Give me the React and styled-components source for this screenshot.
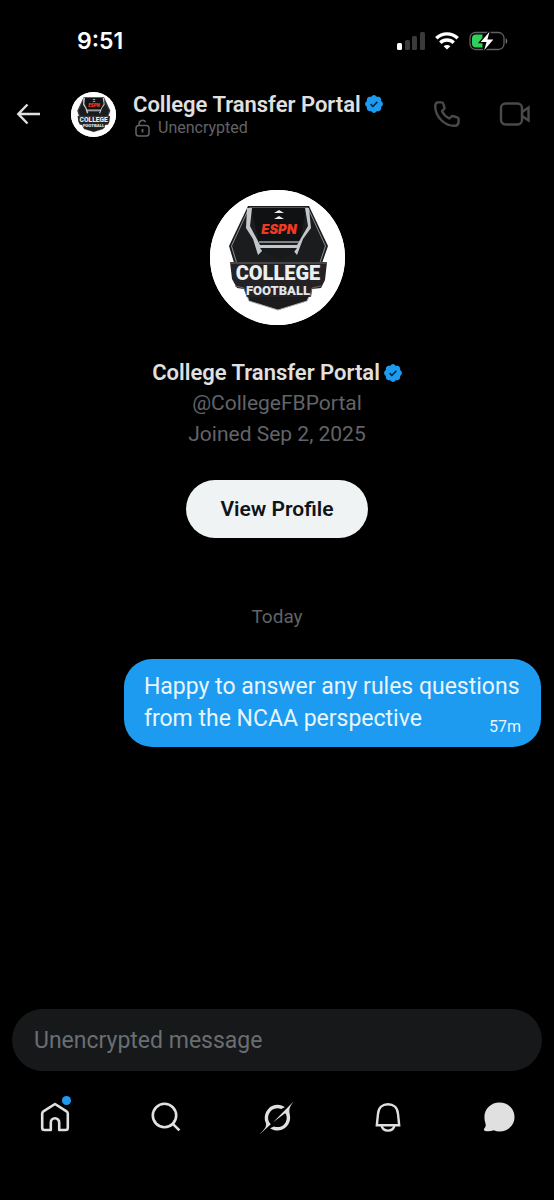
import React from "react";
import styled, { createGlobalStyle } from "styled-components";

const GlobalStyle = createGlobalStyle`
  * {
    box-sizing: border-box;
  }

  body {
    margin: 0;
    background: #000;
    color: #e0e0e0;
    font-family: Roboto, "Liberation Sans", sans-serif;
  }

  button,
  input {
    font: inherit;
    color: inherit;
    border: 0;
    padding: 0;
    background: none;
  }

  svg {
    display: block;
  }
`;

const Screen = styled.div`
  display: flex;
  flex-direction: column;
  min-height: 100vh;
`;

const StatusBar = styled.div`
  display: flex;
  align-items: center;
  justify-content: space-between;
  height: 82px;
  padding: 0 46px 0 77px;
  color: #fff;
`;

const Clock = styled.time`
  font-family: Inter, sans-serif;
  font-size: 23px;
  font-weight: 600;
`;

const StatusIcons = styled.div`
  display: flex;
  align-items: center;
  gap: 10px;
`;

const Header = styled.header`
  display: flex;
  align-items: center;
  height: 64px;
  padding: 0 23px 0 15px;
`;

const IconButton = styled.button`
  display: flex;
  align-items: center;
  justify-content: center;
  flex: none;
  color: ${(p) => (p.$dim ? "#4a4a4a" : "#e0e0e0")};
`;

const Avatar = styled.span`
  display: block;
  flex: none;
  width: ${(p) => p.$size}px;
  height: ${(p) => p.$size}px;
  border-radius: 50%;
  overflow: hidden;
  background: #fff;
`;

const HeaderAvatar = styled.div`
  margin: 0 17px 0 29px;
`;

const HeaderText = styled.div`
  flex: 1;
  min-width: 0;
  padding-top: 2px;
`;

const Name = styled.h1`
  display: flex;
  align-items: center;
  gap: 4px;
  margin: 0;
  font-size: 22px;
  font-weight: 600;
  line-height: ${(p) => p.$line}px;
  white-space: nowrap;
`;

const Encryption = styled.div`
  display: flex;
  align-items: center;
  gap: 8px;
  padding-left: 2px;
  font-size: 16px;
  line-height: 22px;
  color: #606468;
`;

const HeaderActions = styled.div`
  display: flex;
  align-items: center;
  gap: 38px;
`;

const Profile = styled.section`
  display: flex;
  flex-direction: column;
  align-items: center;
  padding-top: 44px;
`;

const ProfileText = styled.div`
  display: flex;
  flex-direction: column;
  align-items: center;
  margin: 32px 0 30px;
`;

const Meta = styled.p`
  margin: 0;
  font-size: 21px;
  line-height: 31px;
  color: #606468;
`;

const ProfileButton = styled.button`
  height: 58px;
  padding: 0 34px;
  border-radius: 29px;
  background: #eff3f4;
  color: #0f1419;
  font-size: 21px;
  font-weight: 600;
`;

const Messages = styled.main`
  display: flex;
  flex: 1;
  flex-direction: column;
  padding: 66px 13px 0;
`;

const Day = styled.div`
  margin-bottom: 29px;
  font-size: 19px;
  line-height: 26px;
  text-align: center;
  color: #606468;
`;

const Bubble = styled.div`
  align-self: flex-end;
  max-width: 79%;
  padding: 12px 20px;
  border-radius: 28px;
  background: #1d9bf0;
  color: #e8f5fd;
`;

const BubbleText = styled.p`
  display: flow-root;
  margin: 0;
  font-size: 23px;
  line-height: 32px;
`;

/* floats into the free end of the last line */
const BubbleTime = styled.time`
  float: right;
  margin-top: 16px;
  font-size: 16px;
  line-height: 16px;
`;

const Composer = styled.div`
  padding: 0 12px;
`;

const MessageInput = styled.input`
  display: block;
  width: 100%;
  height: 62px;
  padding: 0 22px;
  border-radius: 31px;
  background: #16181a;
  font-size: 23px;
  outline: none;

  &::placeholder {
    color: #6a6e72;
    opacity: 1;
  }
`;

const TabBar = styled.nav`
  display: grid;
  grid-template-columns: repeat(5, 1fr);
  height: 129px;
  padding-top: 27px;
`;

const Tab = styled.a`
  display: flex;
  align-items: center;
  justify-content: center;
  height: 38px;
  color: #e0e0e0;
`;

const TabIcon = styled.span`
  position: relative;
`;

const Dot = styled.span`
  position: absolute;
  top: -6px;
  right: -1px;
  width: 9px;
  height: 9px;
  border-radius: 50%;
  background: #1d9bf0;
`;

function TeamLogo() {
  return (
    <svg viewBox="0 0 135 135" width="100%" height="100%" aria-hidden="true">
      <rect width="135" height="135" fill="#fff" />
      <path d="M38 16h61l19 40-7 20H25l-6-20z" fill="#1b1c1e" />
      <path d="M39 18h59l17.500 38-6 18H27l-5.500-18z" fill="none" stroke="#8c9094" strokeWidth="1" />
      <path d="M41 18h55l-6 34H49z" fill="#101113" />
      <path d="M37 18h5l-2 18 10 19h37l11-19-3-18h4l2 20-8 11-6 16-5-6-14 10-14-10-6 6-5-16-7-11z" fill="#c3c7ca" />
      <path d="M50 58h37l-3 4-15 8-16-8z" fill="#18191b" />
      <path d="M49 51h40v2H49z" fill="#7d8184" />
      <path d="M64 23l5-3 5 3zM64 29l5-3 5 3z" fill="#e8eaec" />
      <text x="69" y="44" textAnchor="middle" fontFamily="Inter, sans-serif" fontSize="13" fontWeight="900" fontStyle="italic" fill="#f03a24">
        ESPN
      </text>
      <path d="M35 100h67l-5 11-29 9-29-9z" fill="#1b1c1e" stroke="#a9acae" strokeWidth="1" />
      <path d="M20 72h97l-2 18-4 8-9 1-1 8H37l-3-8-7-1-5-9z" fill="#242224" />
      <path d="M20 73h97M25 96l9 2 3 9M111 96l-9 2-2 9" fill="none" stroke="#68696b" strokeWidth="1" />
      <text x="68" y="90" textAnchor="middle" fontFamily="Roboto, sans-serif" fontSize="20" fontWeight="900" fill="#eceff0">
        COLLEGE
      </text>
      <text x="68" y="105" textAnchor="middle" fontFamily="Roboto, sans-serif" fontSize="13" fontWeight="900" fill="#e3e6e8">
        FOOTBALL
      </text>
    </svg>
  );
}

function Verified() {
  return (
    <svg width="18" height="18" viewBox="1.500 1.500 19 19" role="img" aria-label="Verified account">
      <path
        fill="#1d9bf0"
        d="M20.396 11c-.018-.646-.215-1.275-.57-1.816-.354-.54-.852-.972-1.438-1.246.223-.607.27-1.264.14-1.897-.131-.634-.437-1.218-.882-1.687-.47-.445-1.053-.75-1.687-.882-.633-.13-1.29-.083-1.897.14-.273-.587-.704-1.086-1.245-1.44S11.647 1.62 11 1.604c-.646.017-1.273.213-1.813.568s-.969.854-1.24 1.44c-.608-.223-1.267-.272-1.902-.14-.635.13-1.22.436-1.69.882-.445.47-.749 1.055-.878 1.688-.13.633-.08 1.29.144 1.896-.587.274-1.087.705-1.443 1.245-.356.54-.555 1.17-.574 1.817.02.647.218 1.276.574 1.817.356.54.856.972 1.443 1.245-.224.606-.274 1.263-.144 1.896.13.634.433 1.218.877 1.688.47.443 1.054.747 1.687.878.633.132 1.29.084 1.897-.136.274.586.705 1.084 1.246 1.439.54.354 1.17.551 1.816.569.647-.016 1.276-.213 1.817-.567s.972-.854 1.245-1.44c.604.239 1.266.296 1.903.164.636-.132 1.22-.447 1.68-.907.46-.46.776-1.044.908-1.681s.075-1.299-.165-1.903c.586-.274 1.084-.705 1.439-1.246.354-.54.551-1.17.569-1.816z"
      />
      <path d="M7.4 11.2l2.4 2.4 4.7-4.9" fill="none" stroke="#06263c" strokeWidth="1.7" />
    </svg>
  );
}

function SignalIcon() {
  return (
    <svg width="28" height="18" viewBox="0 0 28 18" aria-hidden="true">
      <rect x="0" y="11" width="5" height="7" rx="1.5" fill="#fff" />
      <rect x="8" y="8" width="5" height="10" rx="1.5" fill="#3a3a3a" />
      <rect x="15" y="4" width="5" height="14" rx="1.5" fill="#3a3a3a" />
      <rect x="23" y="0" width="5" height="18" rx="1.5" fill="#3a3a3a" />
    </svg>
  );
}

function WifiIcon() {
  return (
    <svg width="24" height="18" viewBox="0 0 24 18" fill="none" stroke="#fff" strokeWidth="3.4" aria-hidden="true">
      <path d="M1.300 6.300a15.200 15.200 0 0 1 21.400 0" />
      <path d="M5.300 10.800a9.400 9.400 0 0 1 13.400 0" />
      <path d="M12 17.600l-3.400-3.300a4.800 4.800 0 0 1 6.800 0z" fill="#fff" stroke="none" />
    </svg>
  );
}

function BatteryIcon() {
  return (
    <svg width="39" height="20" viewBox="0 0 39 20" aria-hidden="true">
      <rect x="1" y="1.5" width="34" height="17" rx="5.5" fill="none" stroke="#606060" strokeWidth="1.3" />
      <path d="M36.7 7.2c2 .8 2 4.8 0 5.6z" fill="#777" />
      <path d="M7 3.500h6.500v13H7a4 4 0 0 1-4-4v-5a4 4 0 0 1 4-4z" fill="#30d158" />
      <path d="M20.500.8L11.700 11h5.800l-2.300 8.300L24.300 8.600h-5.900z" fill="#fff" stroke="#000" strokeWidth="2.600" paintOrder="stroke" />
    </svg>
  );
}

function BackIcon() {
  return (
    <svg width="27" height="24" viewBox="0 0 27 24" fill="none" stroke="currentColor" strokeWidth="2.4" aria-hidden="true">
      <path d="M25 12H4M12.500 2.500L3.300 12l9.200 9.500" />
    </svg>
  );
}

function LockIcon() {
  return (
    <svg width="15" height="18" viewBox="0 0 15 18" fill="none" stroke="currentColor" strokeWidth="1.5" aria-hidden="true">
      <rect x="1" y="6.500" width="13" height="10.500" rx="2.800" />
      <path d="M4 6.500V4.700A3.500 3.500 0 0 1 10.600 3.200" />
      <path d="M7.500 10v3.500" strokeWidth="1.800" />
    </svg>
  );
}

function PhoneIcon() {
  return (
    <svg width="28" height="28" viewBox="0 0 28 28" fill="none" stroke="currentColor" strokeWidth="2.4" strokeLinejoin="round" aria-hidden="true">
      <path d="M4.500 2.400h4.300c.6 0 1 .3 1.200.8l1.500 4.300c.2.500.1 1-.3 1.400l-2.200 2.300c1.500 3.100 4.200 5.700 7.300 7.300l2.300-2.200c.4-.4.9-.5 1.400-.3l4.800 1.600c.5.200.8.600.8 1.200v2.700c0 2.700-1.700 4.300-4.300 4.300C11.500 25.800 2.400 16.700 2.200 6.500 2.200 4.300 2.800 2.800 4.500 2.400z" />
    </svg>
  );
}

function VideoIcon() {
  return (
    <svg width="32" height="24" viewBox="0 0 32 24" fill="none" stroke="currentColor" strokeWidth="2.4" aria-hidden="true">
      <rect x="2" y="1.500" width="21" height="21" rx="4.500" />
      <path d="M23 10l6.500-4.500v13L23 14" />
    </svg>
  );
}

function HomeIcon() {
  return (
    <svg width="30" height="30" viewBox="0 0 30 30" fill="none" stroke="currentColor" strokeWidth="2.6" strokeLinejoin="round" aria-hidden="true">
      <path d="M2.200 11.500c0-1 .4-1.700 1.200-2.200L15 2l11.600 7.300c.8.500 1.200 1.200 1.200 2.200v14.300c0 1.400-.8 2.200-2.200 2.200h-6.400v-7.500a4.200 4.200 0 0 0-8.400 0V28H4.400c-1.400 0-2.200-.8-2.200-2.200z" />
    </svg>
  );
}

function SearchIcon() {
  return (
    <svg width="30" height="30" viewBox="0 0 30 30" fill="none" stroke="currentColor" strokeWidth="2.6" aria-hidden="true">
      <circle cx="13.500" cy="13.500" r="11.700" />
      <path d="M21.800 21.800l6.600 6.600" />
    </svg>
  );
}

function GrokIcon() {
  return (
    <svg width="34" height="33" viewBox="0 0 33 32" fill="currentColor" aria-hidden="true">
      <path d="M12.745 20.540l10.970-8.190c.539-.4 1.307-.244 1.564.38 1.349 3.288.746 7.241-1.938 9.955-2.683 2.714-6.417 3.310-9.830 1.954l-3.728 1.745c5.347 3.697 11.840 2.782 15.898-1.324 3.219-3.255 4.216-7.692 3.284-11.693l.008.009c-1.351-5.878.332-8.227 3.782-13.031L33 0l-4.540 4.590v-.014L12.743 20.544m-2.263 1.987c-3.837-3.707-3.175-9.446.1-12.755 2.420-2.449 6.388-3.448 9.852-1.979l3.720-1.737c-.67-.49-1.530-1.017-2.515-1.387-4.455-1.854-9.789-.931-13.410 2.728-3.483 3.523-4.579 8.940-2.697 13.561 1.405 3.454-.899 5.898-3.220 8.364C1.490 30.200.666 31.074 0 32l10.478-9.466" />
    </svg>
  );
}

function BellIcon() {
  return (
    <svg width="28" height="30" viewBox="0 0 28 30" fill="none" stroke="currentColor" strokeWidth="2.4" aria-hidden="true">
      <path d="M2.800 23.300L4 11.800C4.500 5.700 8.700 2.200 14 2.200s9.500 3.500 10 9.600l1.200 11.500z" />
      <path d="M7.500 23.300c.6 3.300 3.100 5.300 6.500 5.300s5.900-2 6.500-5.300" />
    </svg>
  );
}

function ChatIcon() {
  return (
    <svg width="32" height="30" viewBox="0 0 32 30" fill="currentColor" aria-hidden="true">
      <path d="M16.500.5C25 .5 31.500 6.700 31.500 15S25 29.500 16.500 29.500c-2.100 0-4-.4-5.700-1.200-2.700 1-6 1.400-8.800.6-1.300-.4-1.500-1.800-.5-2.700 1.200-1.100 1.500-2.600 1-4.500C1.800 19.600 1.400 17.300 1.400 15 1.400 6.700 8 .5 16.500.5z" />
    </svg>
  );
}

const tabs = [
  { label: "Home", Icon: HomeIcon, unread: true },
  { label: "Search", Icon: SearchIcon },
  { label: "Grok", Icon: GrokIcon },
  { label: "Notifications", Icon: BellIcon },
  { label: "Messages", Icon: ChatIcon },
];

function App() {
  return (
    <Screen>
      <GlobalStyle />
      <StatusBar>
        <Clock>9:51</Clock>
        <StatusIcons>
          <SignalIcon />
          <WifiIcon />
          <BatteryIcon />
        </StatusIcons>
      </StatusBar>

      <Header>
        <IconButton aria-label="Back">
          <BackIcon />
        </IconButton>
        <HeaderAvatar>
          <Avatar $size={45}>
            <TeamLogo />
          </Avatar>
        </HeaderAvatar>
        <HeaderText>
          <Name $line={25}>
            College Transfer Portal <Verified />
          </Name>
          <Encryption>
            <LockIcon />
            Unencrypted
          </Encryption>
        </HeaderText>
        <HeaderActions>
          <IconButton $dim aria-label="Call">
            <PhoneIcon />
          </IconButton>
          <IconButton $dim aria-label="Video call">
            <VideoIcon />
          </IconButton>
        </HeaderActions>
      </Header>

      <Profile>
        <Avatar $size={135}>
          <TeamLogo />
        </Avatar>
        <ProfileText>
          <Name as="h2" $line={31}>
            College Transfer Portal <Verified />
          </Name>
          <Meta>@CollegeFBPortal</Meta>
          <Meta>Joined Sep 2, 2025</Meta>
        </ProfileText>
        <ProfileButton>View Profile</ProfileButton>
      </Profile>

      <Messages>
        <Day>Today</Day>
        <Bubble>
          <BubbleText>
            Happy to answer any rules questions from the NCAA perspective
            <BubbleTime>57m</BubbleTime>
          </BubbleText>
        </Bubble>
      </Messages>

      <Composer>
        <MessageInput type="text" aria-label="Message" placeholder="Unencrypted message" />
      </Composer>

      <TabBar>
        {tabs.map(({ label, Icon, unread }) => (
          <Tab key={label} href="#" aria-label={label}>
            <TabIcon>
              <Icon />
              {unread && <Dot />}
            </TabIcon>
          </Tab>
        ))}
      </TabBar>
    </Screen>
  );
}

export default App;
